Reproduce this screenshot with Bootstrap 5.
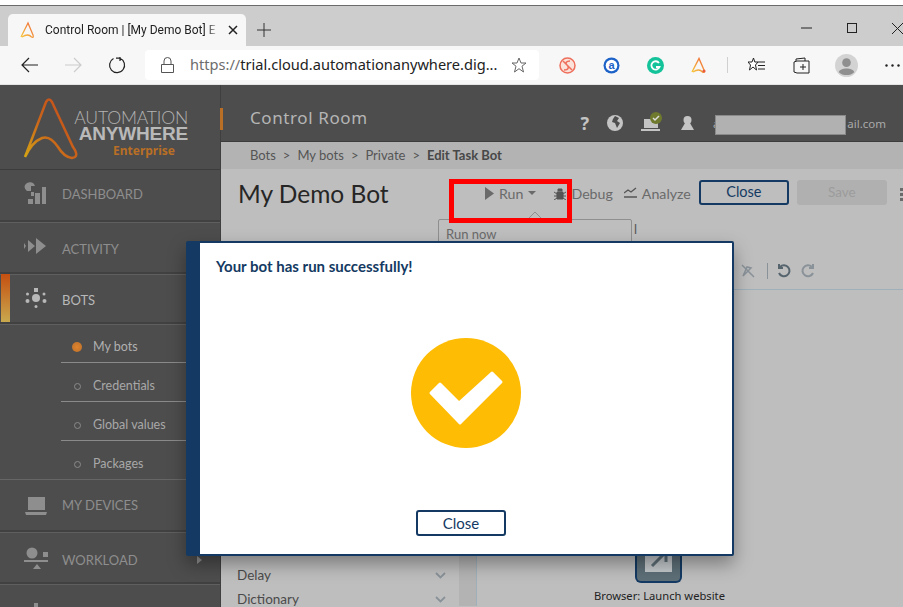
<!DOCTYPE html>
<html lang="en">
<head>
<meta charset="UTF-8">
<meta name="viewport" content="width=device-width, initial-scale=1.0">
<title>Control Room</title>
<link href="https://cdn.jsdelivr.net/npm/bootstrap@5.3.3/dist/css/bootstrap.min.css" rel="stylesheet">
<style>
html, body { height: 607px; overflow: hidden; }
body { position: relative; width: 903px; background: #fff; font-family: "Noto Sans", "Liberation Sans", sans-serif; padding-top: 5px; }

/* browser chrome */
.browser-tabs { height: 41px; background: #cdcdcd; border-top: 1px solid #6b6b6b; padding: 8px 0 0 8px; }
.browser-tab { width: 238px; height: 32px; background: #f7f7f7; border-radius: 5px 5px 0 0; font-size: 12px; color: #222; padding: 0 8px 0 12px; white-space: nowrap; }
.tab-title { width: 174px; overflow: hidden; font-family: "Roboto", sans-serif; -webkit-mask-image: linear-gradient(90deg, #000 93%, transparent); mask-image: linear-gradient(90deg, #000 93%, transparent); }
.tab-plus { margin: 9px 0 0 11px; }
.win-btns { margin-left: auto; gap: 35px; padding-bottom: 9px; height: 37px; }
.browser-bar { height: 39px; background: #f7f7f7; border-bottom: 1px solid #e4e4e4; padding-left: 21px; }
.nav-next { margin-left: 27px; }
.nav-reload { margin-left: 26px; }
.url-box { width: 394px; height: 30px; margin-left: 19px; background: #fff; border-radius: 4px; font-size: 14.6px; color: #222; padding: 0 12px 0 16px; white-space: nowrap; }
.url-box i { font-style: normal; color: #6d6d6d; }
.ext-a { margin-left: 20px; }
.ext-b { margin-left: 27px; }
.ext-sep { display: block; width: 1px; height: 16px; margin-left: 19px; background: #d0d0d0; }
.ext-c { margin-left: 20px; }
.ext-d { margin-left: 28px; }
.ext-e { margin-left: 25px; }
.ext-f { margin-left: 27px; }

/* sidebar */
.app { height: 522px; background: #bebebe; }
.side { width: 221px; flex: none; background: #4d4d4d; border-right: 1px solid #3f3f3f; }
.logo-area { height: 85px; position: relative; border-bottom: 1px solid #3c3c3c; padding: 0 32px 0 0; text-align: right; }
.logo-area svg { position: absolute; left: 22px; top: 12px; }
.logo-a { font-size: 17.6px; line-height: 16px; color: #b3b3b3; font-family: "Lato", sans-serif; font-weight: 300; padding-top: 25px; height: 41px; letter-spacing: -.2px; }
.logo-b { font-size: 19px; line-height: 16px; color: #b9b9b9; font-family: "Liberation Sans", sans-serif; font-weight: 700; letter-spacing: -.2px; }
.logo-c { font-size: 12px; line-height: 18px; color: #b96f25; font-weight: 700; padding-right: 13px; }
.logo-bar { position: absolute; left: 220px; top: 23px; width: 3px; height: 22px; background: #b96f25; }
.side-row { height: 52px; padding-left: 62px; position: relative; border-bottom: 2px solid #414141; box-shadow: 0 1px 0 #5f5f5f; font-size: 13px; color: #8e8e8e; font-family: "Lato", sans-serif; }
.side-row svg { position: absolute; left: 24px; top: 12px; }
.side-row.lower { padding-top: 2px; }
.side-row.lower svg { top: 15px; }
.side-row.drop-a { padding-top: 5px; }
.side-row.lower.drop-b { padding-top: 8px; }
.side-row.active { color: #b8b8b8; height: 50px; }
.side-row.active::before { content: ""; position: absolute; left: 1px; top: 0; bottom: 0; width: 9px; background: linear-gradient(#c54f10, #c9a94e); }
.side-row.lower svg.more-arrow { left: 197px; top: 24px; }
.sub-list { height: 156px; padding-left: 61px; border-bottom: 1px solid #666; }
.sub-row { height: 39px; padding-top: 8px; border-bottom: 1px solid #8a8a8a; font-size: 12.5px; color: #a8a8a8; font-family: "Lato", sans-serif; padding-left: 11px; gap: 12px; }
.sub-row:last-child { border-bottom: 0; }
.sub-row b { width: 7px; height: 7px; border: 1.5px solid #8a8a8a; border-radius: 50%; flex: none; margin-left: 2px; }
.sub-row.current { color: #b0b0b0; gap: 11px; }
.sub-row.current b { width: 10px; height: 10px; border: 0; margin-left: 0; background: radial-gradient(#e0832c, #b9702c); }

/* main column */
.main-col { flex: 1; min-width: 0; font-family: "Lato", sans-serif; }
.top-head { height: 57px; background: #4d4d4d; border-bottom: 1px solid #3c3c3c; padding: 10px 0 0 29px; color: #b5b5b5; }
.top-head h1 { font-size: 17px; margin: 0; font-weight: 400; letter-spacing: .6px; font-family: "Noto Sans", sans-serif; }
.head-icons { gap: 18px; margin: 10px 0 0 auto; }
.help-mark { font-size: 18px; line-height: 1; font-weight: 700; color: #c4c4c4; font-family: "Noto Sans", sans-serif; }
.user-mail { font-size: 11.5px; color: #aaa; position: relative; width: 173px; margin: 10px 17px 0 19px; line-height: 17px; font-family: "Noto Sans", sans-serif; }
.mail-mask { position: absolute; left: 2px; top: 0; width: 131px; height: 20px; background: #b1b1b1; border: 1px solid #8a8a8a; }
.crumbs { height: 27px; background: #b3b3b3; padding-left: 29px; font-size: 13px; color: #555; gap: 7px; }
.crumbs strong { font-weight: 700; color: #484848; }
.title-row { height: 49px; padding-left: 17px; position: relative; }
.title-row h2 { font-size: 24.5px; margin: 0; color: #262626; font-weight: 400; width: 247px; }
.tool-link { color: #6a6a6a; font-size: 14.2px; gap: 5px; white-space: nowrap; }
.tool-debug { margin-left: 18px; gap: 5px; }
.tool-analyze { margin-left: 11px; }
.btn.btn-ghost { width: 90px; height: 25px; padding: 0; margin: 0 0 2px 8px; border: 2px solid #143a63; border-radius: 3px; color: #143a63; font-size: 14.5px; line-height: 1; background: transparent; }
.btn.btn-off:disabled { width: 90px; height: 25px; padding: 0; margin: 0 0 2px 8px; border: 0; border-radius: 3px; background: #b0b0b0; color: #9c9c9c; font-size: 13.5px; opacity: 1; }
.more-dots { position: absolute; left: 679px; top: 19px; }
.run-menu { position: absolute; left: 438px; top: 219px; width: 194px; height: 40px; background: #bebebe; border: 1px solid #8f8f8f; border-radius: 2px; padding: 5px 7px; font-size: 13px; color: #6a6a6a; font-family: "Lato", sans-serif; }
.run-notch { position: absolute; left: 527px; top: 212px; }
.tab-rest { position: absolute; left: 634px; top: 220px; font-size: 13px; color: #555; font-family: "Lato", sans-serif; }
.tool-strip { height: 72px; border-bottom: 1px solid #9fb0bb; padding: 34px 0 0 520px; }
.strip-sep { display: block; width: 1px; height: 16px; margin-left: 12px; background: #8a9299; }
.strip-undo { margin-left: 9px; }
.strip-redo { margin-left: 10px; }
.work { height: 316px; }
.pal { width: 238px; padding: 273px 0 0 16px; font-size: 13.5px; color: #4a4a4a; flex: none; }
.pal-row { height: 24px; padding-right: 13px; }
.gutter { width: 18px; background: #b3b3b3; border-right: 1px solid #9fb0bb; flex: none; }
.canvas { flex: 1; width: 0; padding-top: 251px; }
.node-ico { width: 47px; height: 42px; margin-left: 158px; padding-bottom: 9px; background: #5e6f78; border: 2px solid #143a63; border-top: 0; border-radius: 0 0 6px 6px; }
.node-ico svg { align-self: flex-end; }
.node-cap { margin: 5px 0 0 117px; font-size: 11.2px; color: #222; white-space: nowrap; font-family: "Noto Sans", sans-serif; }

/* overlays */
.red-box { position: absolute; left: 449px; top: 179px; width: 123px; height: 44px; border: 5px solid #fe0000; }
.done-dialog { position: absolute; left: 186px; top: 241px; width: 548px; height: 315px; background: #fff; border: 2px solid #143a63; border-left-width: 14px; border-radius: 2px; box-shadow: 0 8px 18px rgba(0,0,0,.35); padding: 13px 0 18px 16px; font-family: "Lato", sans-serif; }
.done-dialog h3 { font-size: 15px; margin: 0; font-weight: 700; color: #143a63; line-height: 20px; }
.done-mid { flex: 1; padding: 1px 16px 0 0; }
.done-foot { padding-right: 26px; }
.btn.btn-done { width: 90px; height: 26px; padding: 0; border: 2px solid #143a63; border-radius: 3px; color: #143a63; background: #fff; font-size: 15px; line-height: 1; }
</style>
</head>
<body>
    <!-- browser chrome -->
    <div class="browser-tabs d-flex align-items-start">
        <div class="browser-tab d-flex align-items-center">
            <svg width="17" height="18" viewBox="0 0 17 18" class="me-2 flex-none"><defs><linearGradient id="fav" x1="0" y1="1" x2="1" y2="0"><stop offset="0" stop-color="#f7c93e"/><stop offset="1" stop-color="#f0653a"/></linearGradient></defs><path d="M1 16 L8 2 L13 14 Q14 17 11.500 16 Q8 12 2 16" fill="none" stroke="url(#fav)" stroke-width="1.300"/></svg>
            <span class="tab-title">Control Room | [My Demo Bot] E</span>
            <svg width="10" height="10" viewBox="0 0 10 10" class="ms-auto"><path d="M1 1 9 9M9 1 1 9" stroke="#222" stroke-width="1.500"/></svg>
        </div>
        <svg width="14" height="14" viewBox="0 0 14 14" class="tab-plus"><path d="M7 0V14M0 7H14" stroke="#333"/></svg>
        <div class="win-btns d-flex align-items-center">
            <svg width="11" height="12" viewBox="0 0 11 12"><path d="M0 6H11" stroke="#222"/></svg>
            <svg width="10" height="10" viewBox="0 0 10 10"><rect x=".5" y=".5" width="9" height="9" fill="none" stroke="#222"/></svg>
            <svg width="11" height="11" viewBox="0 0 11 11"><path d="M0 0 11 11M11 0 0 11" stroke="#222"/></svg>
        </div>
    </div>
    <div class="browser-bar d-flex align-items-center">
        <svg width="17" height="16" viewBox="0 0 17 16"><path d="M17 8H1M8 1 1 8l7 7" fill="none" stroke="#222" stroke-width="1.200"/></svg>
        <svg width="17" height="16" viewBox="0 0 17 16" class="nav-next"><path d="M0 8H16M9 1l7 7-7 7" fill="none" stroke="#ccc" stroke-width="1.200"/></svg>
        <svg width="18" height="18" viewBox="0 0 18 18" class="nav-reload"><path d="M12 2.200A7.500 7.500 0 1 1 5.500 2.500M12 1v4M12 2.200H8" fill="none" stroke="#222" stroke-width="1.200"/></svg>
        <div class="url-box d-flex align-items-center">
            <svg width="13" height="16" viewBox="0 0 13 16" class="me-3 flex-none"><path d="M.5 7.500h12v8H.5zM3 7.500V4a3.500 3.500 0 0 1 7 0v3.500" fill="none" stroke="#555"/></svg>
            <span><i>https://</i>trial.cloud.automationanywhere.dig...</span>
            <svg width="16" height="16" viewBox="0 0 16 16" class="ms-auto flex-none"><path d="M8 1l2 5h5l-4 3.200L12.500 15 8 11.700 3.500 15 5 9.200 1 6h5z" fill="none" stroke="#666"/></svg>
        </div>
        <svg width="17" height="17" viewBox="0 0 17 17" class="ext-a"><circle cx="8.500" cy="8.500" r="7.500" fill="#fbe3dc" stroke="#ee6f5c" stroke-width="1.500"/><path d="M4 4l9 9M11 4c-4 0-5 2-3 4s2 5-3 5" fill="none" stroke="#ee6f5c" stroke-width="1.500"/></svg>
        <svg width="17" height="17" viewBox="0 0 17 17" class="ext-b"><circle cx="8.500" cy="8.500" r="8" fill="#1c62c8"/><circle cx="8.500" cy="8.500" r="5.800" fill="#fff"/><text x="8.500" y="12" text-anchor="middle" font-size="11" font-weight="700" fill="#1c62c8" font-family="Liberation Sans, sans-serif">a</text></svg>
        <svg width="17" height="17" viewBox="0 0 17 17" class="ext-b"><circle cx="8.500" cy="8.500" r="8.500" fill="#15c39a"/><path d="M12 6A4.200 4.200 0 1 0 12.500 10H9" fill="none" stroke="#fff" stroke-width="1.800"/></svg>
        <svg width="17" height="17" viewBox="0 0 17 17" class="ext-b"><path d="M1 15 L8 1.500 L13 13 Q14 16 11.500 15 Q8 11 2 15" fill="none" stroke="url(#fav)" stroke-width="1.400"/><circle cx="13" cy="14" r="1.600" fill="#ea5a3c"/></svg>
        <span class="ext-sep"></span>
        <svg width="17" height="17" viewBox="0 0 17 17" class="ext-c"><path d="M5.500 1l1.300 4H10L7.500 8 8.500 13 5 10 1.500 13 2.500 8 0 5h4zM10 5h7M10 8.500h7M10 12h7" fill="#fff" stroke="#222"/></svg>
        <svg width="17" height="17" viewBox="0 0 17 17" class="ext-d"><path d="M3 4V2l9-1v3M1 5l3-1h12v12H4L1 15zM10 7v6M7 10h6" fill="none" stroke="#222"/></svg>
        <svg width="23" height="23" viewBox="0 0 24 24" class="ext-e"><circle cx="12" cy="12" r="12" fill="#d3d3d3"/><circle cx="12" cy="9" r="4.500" fill="#8f8f8f"/><path d="M4 19c1-5 15-5 16 0-4 4-12 4-16 0z" fill="#8f8f8f"/></svg>
        <svg width="15" height="3" viewBox="0 0 15 3" class="ext-f"><circle cx="1.500" cy="1.500" r="1.200" fill="#222"/><circle cx="7.500" cy="1.500" r="1.200" fill="#222"/><circle cx="13.500" cy="1.500" r="1.200" fill="#222"/></svg>
    </div>

    <div class="app d-flex">
        <div class="side flex-none">
            <div class="logo-area">
                <svg width="62" height="68" viewBox="0 0 62 68"><defs><linearGradient id="logoG" x1="0" y1="1" x2="1" y2="0"><stop offset="0" stop-color="#d5a515"/><stop offset=".45" stop-color="#c9651a"/><stop offset="1" stop-color="#c4491a"/></linearGradient></defs><path d="M3 60 L24 5 Q27 0 30 5 L51 50 Q58 60 50 61 Q42 60 36 50 Q28 38 20 41 Q10 45 3 60" fill="none" stroke="url(#logoG)" stroke-width="2.500"/></svg>
                <div class="logo-a">AUTOMATION</div>
                <div class="logo-b">ANYWHERE</div>
                <div class="logo-c">Enterprise</div>
                <span class="logo-bar"></span>
            </div>
            <div class="side-row d-flex align-items-center">
                <svg width="24" height="24" viewBox="0 0 24 24"><path d="M1 3a5.500 5.500 0 0 1 10 1H7v5H3A5 5 0 0 1 1 3zM4 17h5v5H4zM11 11h5v11h-5zM18 5h4v17h-4zM7 10h3v4H7z" fill="#8e8e8e"/></svg>
                DASHBOARD
            </div>
            <div class="side-row drop-a d-flex align-items-center">
                <svg width="24" height="24" viewBox="0 0 24 24"><path d="M0 9l2 3-2 3zM4 6l7 6-7 6zM12 4l10 8-10 8z" fill="#8e8e8e"/></svg>
                ACTIVITY
            </div>
            <div class="side-row active drop-a d-flex align-items-center">
                <svg width="24" height="24" viewBox="0 0 24 24"><circle cx="12" cy="12" r="4" fill="#b8b8b8"/><path d="M10 2h4v4h-4z" fill="#b8b8b8"/><circle cx="3.500" cy="8" r="1.500" fill="#b8b8b8"/><circle cx="20" cy="8" r="1.500" fill="#b8b8b8"/><circle cx="3.500" cy="15" r="2" fill="#b8b8b8"/><circle cx="20.500" cy="15" r="2" fill="#b8b8b8"/><circle cx="12" cy="20.500" r="1.500" fill="#b8b8b8"/></svg>
                BOTS
            </div>
            <div class="sub-list">
                <div class="sub-row current d-flex align-items-center"><b></b>My bots</div>
                <div class="sub-row d-flex align-items-center"><b></b>Credentials</div>
                <div class="sub-row d-flex align-items-center"><b></b>Global values</div>
                <div class="sub-row d-flex align-items-center"><b></b>Packages</div>
            </div>
            <div class="side-row lower d-flex align-items-center">
                <svg width="24" height="24" viewBox="0 0 24 24"><path d="M4 2h17v13H4zM1 17h22l-1 3H2z" fill="#8e8e8e"/></svg>
                MY DEVICES
            </div>
            <div class="side-row lower drop-b d-flex align-items-center">
                <svg width="24" height="24" viewBox="0 0 24 24"><circle cx="8" cy="6" r="5.500" fill="#8e8e8e"/><path d="M19 5h5v5h-5zM0 13h24v2H0zM13 17l4 5H9z" fill="#8e8e8e"/></svg>
                WORKLOAD
                <svg class="more-arrow" width="5" height="8" viewBox="0 0 5 8"><path d="M0 0l5 4-5 4z" fill="#8e8e8e"/></svg>
            </div>
            <div class="side-row lower d-flex align-items-center">
                <svg width="24" height="24" viewBox="0 0 24 24"><path d="M10 4h4v16h-4zM1 10h7v6H1zM16 10h7v6h-7z" fill="#8e8e8e"/></svg>
            </div>
        </div>

        <div class="main-col">
            <div class="top-head d-flex align-items-center">
                <h1>Control Room</h1>
                <div class="head-icons d-flex align-items-center">
                    <span class="help-mark">?</span>
                    <svg width="16" height="16" viewBox="0 0 16 16"><circle cx="8" cy="8" r="8" fill="#c4c4c4"/><path d="M8 1l4 2-2 3 3 2-3 5-2-5-3-1 1-3z" fill="#4d4d4d"/></svg>
                    <svg width="22" height="22" viewBox="0 0 22 22"><path d="M3 7h14v9H3zM0 17h19v2H0z" fill="#c4c4c4"/><circle cx="15" cy="6" r="6" fill="#6f7a2e"/><path d="M12 6l2 2 4-4" fill="none" stroke="#ddd" stroke-width="1.500"/></svg>
                    <svg width="13" height="14" viewBox="0 0 13 14"><circle cx="6.500" cy="4" r="4" fill="#c4c4c4"/><path d="M4 7h5l4 7H0z" fill="#c4c4c4"/></svg>
                </div>
                <div class="user-mail d-flex justify-content-between"><span>a</span><span class="mail-mask"></span><span>ail.com</span></div>
            </div>
            <div class="crumbs d-flex align-items-center">
                <span>Bots</span><span>&gt;</span><span>My bots</span><span>&gt;</span><span>Private</span><span>&gt;</span><strong>Edit Task Bot</strong>
            </div>
            <div class="title-row d-flex align-items-center">
                <h2>My Demo Bot</h2>
                <span class="tool-link d-flex align-items-center">
                    <svg width="9" height="13" viewBox="0 0 9 13"><path d="M0 0l9 6.500L0 13z" fill="#6a6a6a"/></svg>Run
                    <svg width="8" height="4" viewBox="0 0 8 4"><path d="M0 0h8L4 4z" fill="#6a6a6a"/></svg>
                </span>
                <span class="tool-link tool-debug d-flex align-items-center">
                    <svg width="12" height="13" viewBox="0 0 12 13"><path d="M4 2h4v2H4zM3 5h6v7H3zM0 5l3 2M12 5 9 7M0 9h3M9 9h3M0 13l3-2M12 13l-3-2" fill="#555" stroke="#555"/></svg>Debug
                </span>
                <span class="tool-link tool-analyze d-flex align-items-center">
                    <svg width="13" height="12" viewBox="0 0 13 12"><path d="M0 6l4-3 3 2 5-4M0 10h13" fill="none" stroke="#555" stroke-width="1.300"/></svg>Analyze
                </span>
                <button type="button" class="btn btn-ghost">Close</button>
                <button type="button" class="btn btn-off" disabled>Save</button>
                <svg class="more-dots" width="3" height="13" viewBox="0 0 3 13"><path d="M0 0h3v3H0zM0 5h3v3H0zM0 10h3v3H0z" fill="#6a6a6a"/></svg>
            </div>
            <div class="tool-strip d-flex align-items-center">
                <svg width="14" height="14" viewBox="0 0 14 14"><path d="M2 12l4-9 4 1zM1 1l12 12" fill="none" stroke="#8a9299" stroke-width="1.500"/></svg>
                <span class="strip-sep"></span>
                <svg width="14" height="14" viewBox="0 0 14 14" class="strip-undo"><path d="M3 3a5.500 5.500 0 1 1-1 6M2 0v4h4" fill="none" stroke="#56646e" stroke-width="2"/></svg>
                <svg width="14" height="14" viewBox="0 0 14 14" class="strip-redo"><path d="M11 3a5.500 5.500 0 1 0 1 6M12 0v4H8" fill="none" stroke="#8a9299" stroke-width="2"/></svg>
            </div>
            <div class="work d-flex">
                <div class="pal">
                    <div class="pal-row d-flex align-items-center justify-content-between">Delay
                        <svg width="11" height="7" viewBox="0 0 11 7"><path d="M1 1l4.500 4.500L10 1" fill="none" stroke="#8a9299" stroke-width="1.800"/></svg>
                    </div>
                    <div class="pal-row d-flex align-items-center justify-content-between">Dictionary
                        <svg width="11" height="7" viewBox="0 0 11 7"><path d="M1 1l4.500 4.500L10 1" fill="none" stroke="#8a9299" stroke-width="1.800"/></svg>
                    </div>
                </div>
                <div class="gutter"></div>
                <div class="canvas">
                    <div class="node-ico d-flex justify-content-center">
                        <svg width="27" height="27" viewBox="0 0 27 27"><path d="M0 0h27v27H0z" fill="#c3c8cb"/><path d="M7 21 20 8M11 7h10v10" fill="none" stroke="#5e6f78" stroke-width="3"/></svg>
                    </div>
                    <div class="node-cap">Browser: Launch website</div>
                </div>
            </div>
        </div>
    </div>

    <div class="tab-rest">l</div>
    <svg class="run-notch" width="16" height="8" viewBox="0 0 16 8"><path d="M0 8 8 0l8 8" fill="#bebebe" stroke="#8f8f8f"/></svg>
    <div class="run-menu">Run now</div>
    <div class="red-box"></div>

    <div class="done-dialog d-flex flex-column">
        <h3>Your bot has run successfully!</h3>
        <div class="done-mid d-flex align-items-center justify-content-center">
            <svg width="110" height="110" viewBox="0 0 110 110"><circle cx="55" cy="55" r="55" fill="#ffbc04"/><path d="M20 55 L29 46 L48 65 L81 35 L90 44 L49 85 Z" fill="#fff" stroke="#fff" stroke-width="3" stroke-linejoin="round"/></svg>
        </div>
        <div class="done-foot text-center"><button type="button" class="btn btn-done">Close</button></div>
    </div>

<script src="https://cdn.jsdelivr.net/npm/bootstrap@5.3.3/dist/js/bootstrap.bundle.min.js"></script>
</body>
</html>
